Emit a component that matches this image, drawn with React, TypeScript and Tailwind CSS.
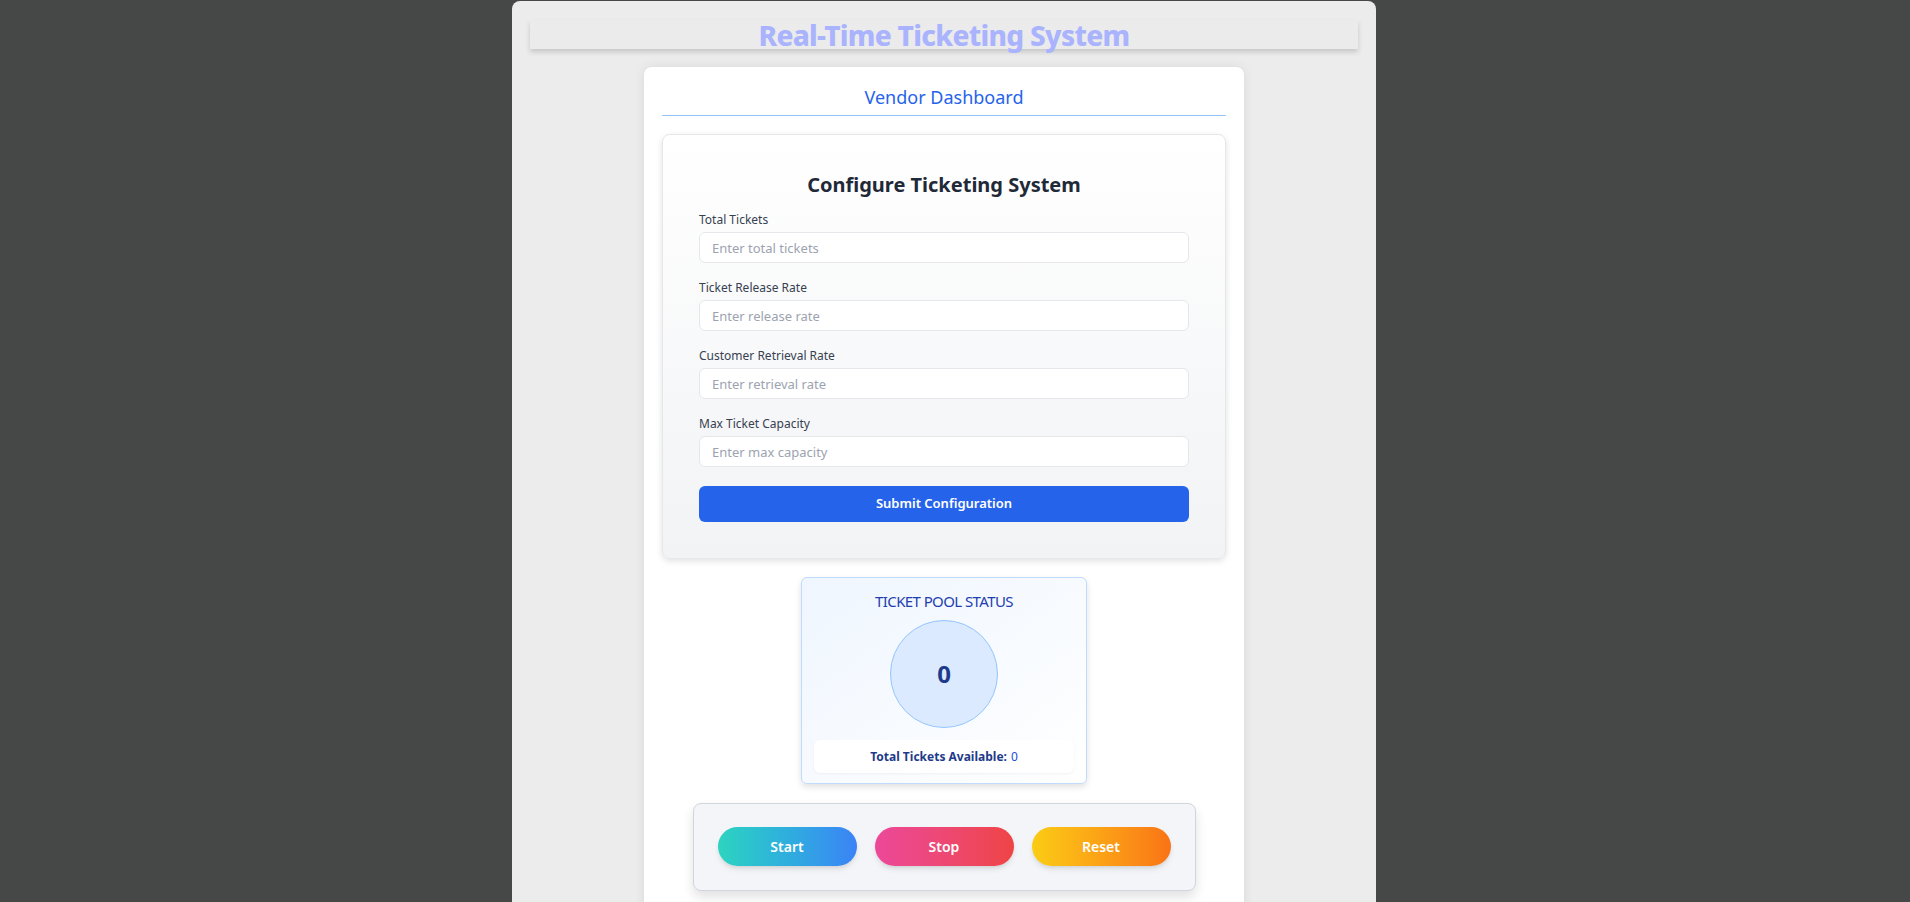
import { useState } from 'react';

const fields = [
  { label: 'Total Tickets', placeholder: 'Enter total tickets' },
  { label: 'Ticket Release Rate', placeholder: 'Enter release rate' },
  { label: 'Customer Retrieval Rate', placeholder: 'Enter retrieval rate' },
  { label: 'Max Ticket Capacity', placeholder: 'Enter max capacity' },
];

const App = () => {
  const [values, setValues] = useState<string[]>(['', '', '', '']);
  const [available] = useState(0);

  return (
    <div className="min-h-screen bg-[#464747] pr-[22px] font-['Segoe_UI','Noto_Sans',sans-serif]">
      <div className="mx-auto w-[864px] pt-px">
        <div className="rounded-t-lg bg-[#ececec] px-[18px] pt-[19px] pb-[31px]">
          {/* Header */}
          <header className="h-[29px] bg-[#ebebeb] shadow-[0_3px_5px_rgba(0,0,0,0.16)]">
            <h1 className="text-center text-[28px] font-extrabold leading-[30px] tracking-tight text-[#a9b3fe]">
              Real-Time Ticketing System
            </h1>
          </header>

          {/* Vendor card */}
          <div className="mx-auto mt-[18px] w-[600px] rounded-lg bg-white px-[18px] pt-4 pb-[120px] shadow-[0_0_12px_rgba(0,0,0,0.08)]">
            <h2 className="border-b border-[#93c2f8] pb-1 text-center text-[18px] leading-7 text-[#2563eb]">
              Vendor Dashboard
            </h2>

            {/* Configuration form */}
            <div className="mt-[18px] rounded-lg border border-gray-200 bg-gradient-to-b from-white to-[#f2f3f5] px-9 pt-9 pb-9 shadow-[0_2px_6px_rgba(0,0,0,0.12)]">
              <h3 className="mb-[13px] text-center text-[20px] font-bold leading-7 text-[#1f2937]">
                Configure Ticketing System
              </h3>
              {fields.map((f, i) => (
                <div key={f.label} className="mb-[17px]">
                  <label className="mb-1 block text-[12px] leading-4 text-[#374151]">{f.label}</label>
                  <input
                    type="number"
                    value={values[i]}
                    onChange={e => {
                      const next = [...values];
                      next[i] = e.target.value;
                      setValues(next);
                    }}
                    placeholder={f.placeholder}
                    className="block h-[31px] w-full rounded-md border border-gray-200 bg-white px-3 text-[13px] text-gray-800 placeholder:text-[#9ca3af] focus:outline-none"
                  />
                </div>
              ))}
              <button className="mt-[2px] h-9 w-full rounded-md bg-[#2563eb] text-[13px] font-semibold text-white">
                Submit Configuration
              </button>
            </div>

            {/* Ticket pool */}
            <div className="mx-auto mt-[18px] w-[286px] rounded-md border border-[#bfdbfe] bg-gradient-to-br from-[#eff6ff] to-white px-3 pt-[13px] pb-[10px] shadow-[0_3px_6px_rgba(0,0,0,0.12)]">
              <h4 className="text-center text-[15px] leading-5 tracking-[-0.04em] text-[#1e40af]">TICKET POOL STATUS</h4>
              <div className="mx-auto mt-[9px] flex h-[108px] w-[108px] items-center justify-center rounded-full border border-[#93c5fd] bg-[#dbeafe]">
                <span className="text-[24px] font-bold text-[#1e3a8a]">{available}</span>
              </div>
              <div className="mt-3 flex h-[33px] items-center justify-center rounded-md bg-white text-[12px] shadow-[0_1px_3px_rgba(0,0,0,0.05)]">
                <span className="font-bold text-[#1e3a8a]">Total Tickets Available:</span>
                <span className="ml-1 text-[#1d4ed8]">{available}</span>
              </div>
            </div>

            {/* Controls */}
            <div className="mx-auto mt-[19px] flex w-[503px] gap-[18px] rounded-lg border border-gray-300 bg-[#f4f5f8] px-6 pt-[23px] pb-6 shadow-[0_6px_12px_rgba(0,0,0,0.12)]">
              <button className="h-[39px] w-[139px] rounded-full bg-gradient-to-r from-[#2dd4bf] to-[#3b82f6] text-[14px] font-semibold text-white shadow-md">
                Start
              </button>
              <button className="h-[39px] w-[139px] rounded-full bg-gradient-to-r from-[#ec4899] to-[#ef4444] text-[14px] font-semibold text-white shadow-md">
                Stop
              </button>
              <button className="h-[39px] w-[139px] rounded-full bg-gradient-to-r from-[#facc15] to-[#f97316] text-[14px] font-semibold text-white shadow-md">
                Reset
              </button>
            </div>
          </div>
        </div>
      </div>
    </div>
  );
};

export default App;
